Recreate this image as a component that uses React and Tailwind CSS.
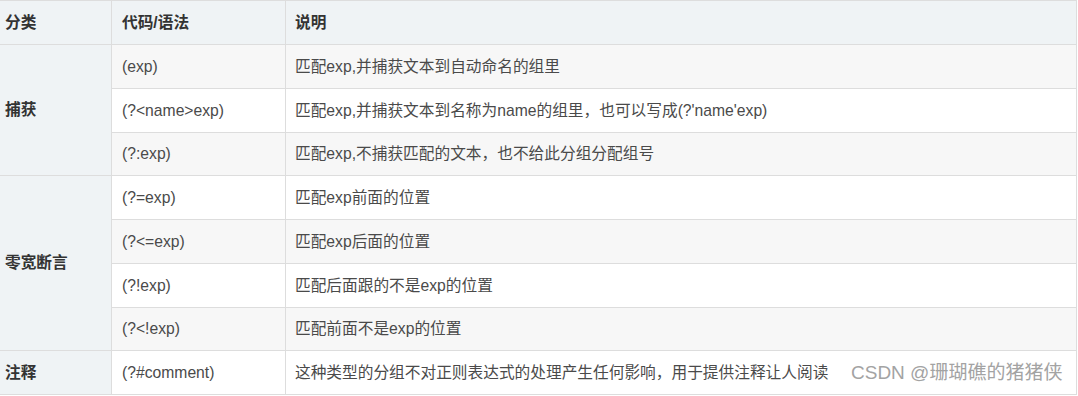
import React from "react";

const rows = [
  { code: "(exp)", desc: "匹配exp,并捕获文本到自动命名的组里" },
  { code: "(?<name>exp)", desc: "匹配exp,并捕获文本到名称为name的组里，也可以写成(?'name'exp)" },
  { code: "(?:exp)", desc: "匹配exp,不捕获匹配的文本，也不给此分组分配组号" },
  { code: "(?=exp)", desc: "匹配exp前面的位置" },
  { code: "(?<=exp)", desc: "匹配exp后面的位置" },
  { code: "(?!exp)", desc: "匹配后面跟的不是exp的位置" },
  { code: "(?<!exp)", desc: "匹配前面不是exp的位置" },
  { code: "(?#comment)", desc: "这种类型的分组不对正则表达式的处理产生任何影响，用于提供注释让人阅读" },
];

const cell = "flex items-center border-r border-b border-[#dddddd]";

export default function App() {
  return (
    <div className="relative w-[1078px] h-[396px] bg-white font-[family-name:'Liberation_Sans','Noto_Sans_CJK_SC',sans-serif] text-[15.7px] text-[#4a4a4a]">
      <div className="grid w-[1077px] grid-cols-[112px_174px_791px] grid-rows-[44px_44px_44px_43px_44px_44px_44px_43px_44px] border-t border-[#dddddd]">
        <div className={`${cell} bg-[#eff3f5] pl-[5px] font-bold text-[#333333]`}>分类</div>
        <div className={`${cell} bg-[#eff3f5] pl-[10px] font-bold text-[#333333]`}>代码/语法</div>
        <div className={`${cell} bg-[#eff3f5] pl-[9px] font-bold text-[#333333]`}>说明</div>

        <div className={`${cell} col-start-1 row-start-2 row-span-3 bg-[#eff3f5] pl-[5px] font-bold text-[#333333]`}>捕获</div>
        <div className={`${cell} col-start-1 row-start-5 row-span-4 bg-[#eff3f5] pl-[5px] font-bold text-[#333333]`}>零宽断言</div>
        <div className={`${cell} col-start-1 row-start-9 bg-[#eff3f5] pl-[5px] font-bold text-[#333333]`}>注释</div>

        {rows.map((r, i) => {
          const bg = i % 2 === 0 ? "bg-[#f7f7f7]" : "bg-white";
          return (
            <React.Fragment key={i}>
              <div className={`${cell} col-start-2 ${bg} pl-[10px]`} style={{ gridRowStart: i + 2 }}>
                {r.code}
              </div>
              <div className={`${cell} col-start-3 ${bg} pl-[9px]`} style={{ gridRowStart: i + 2 }}>
                {r.desc}
              </div>
            </React.Fragment>
          );
        })}
      </div>
      <div className="absolute left-[851px] top-[360px] text-[19px] leading-[26px] text-[#a3a3a3] whitespace-nowrap">
        CSDN @珊瑚礁的猪猪侠
      </div>
    </div>
  );
}
